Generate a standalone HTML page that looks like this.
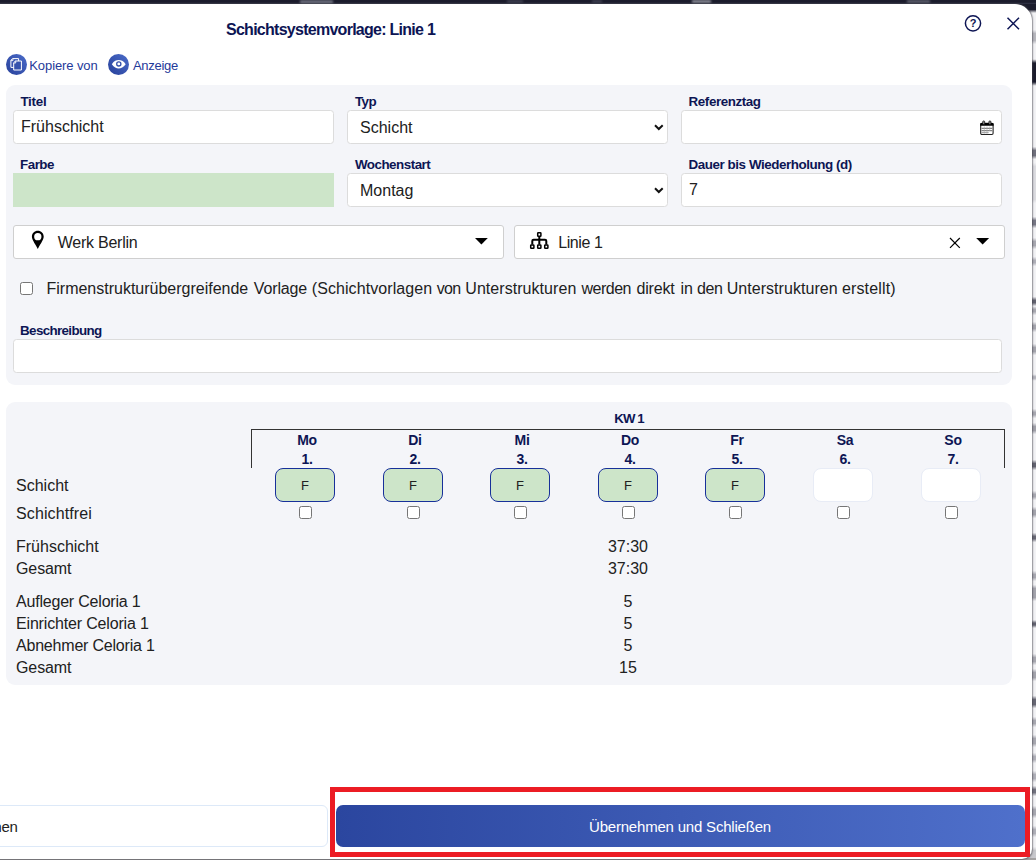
<!DOCTYPE html>
<html lang="de">
<head>
<meta charset="utf-8">
<title>Schichtsystemvorlage: Linie 1</title>
<style>
*{box-sizing:border-box;margin:0;padding:0}
html,body{width:1036px;height:860px;overflow:hidden}
body{background:#1b1c2c;font-family:"Liberation Sans",sans-serif;color:#212121;position:relative}
.abs{position:absolute}
#bgR{left:1020px;top:0;width:16px;height:860px;background:linear-gradient(180deg,#1b1c2c 0,#1b1c2c 9.5px,#f3f3f5 13px,#f3f3f5 29.8px,#b8b8be 33.5px,#b8b8be 40.5px,#f3f3f5 44.2px,#f3f3f5 59.2px,#1b1c2c 63.0px,#1b1c2c 82.0px,#f3f3f5 85.8px,#f3f3f5 146.8px,#70707c 150.5px,#70707c 155.5px,#f3f3f5 159.2px,#f3f3f5 162.8px,#dcdce0 166.5px,#dcdce0 199.5px,#f3f3f5 203.2px,#f3f3f5 216.8px,#777784 220.5px,#777784 224.5px,#f3f3f5 228.2px,#f3f3f5 237.8px,#a8a8b0 241.5px,#a8a8b0 245.5px,#f3f3f5 249.2px,#f3f3f5 256.8px,#b0b0b8 260.3px,#b0b0b8 262.7px,#f3f3f5 266.2px,#f3f3f5 296.8px,#62626e 300.3px,#62626e 302.7px,#f3f3f5 306.2px,#f3f3f5 305.8px,#a8a8b0 309.3px,#a8a8b0 311.7px,#f3f3f5 315.2px,#f3f3f5 321.8px,#a4a4ac 325.5px,#a4a4ac 328.5px,#f3f3f5 332.2px,#f3f3f5 343.8px,#a4a4ac 347.5px,#a4a4ac 351.5px,#f3f3f5 355.2px,#f3f3f5 374.2px,#b4b4bc 376.7px,#b4b4bc 378.3px,#f3f3f5 380.8px,#f3f3f5 408.8px,#a8a8b0 412.3px,#a8a8b0 414.7px,#f3f3f5 418.2px,#f3f3f5 422.8px,#a0a0a8 426.5px,#a0a0a8 430.5px,#f3f3f5 434.2px,#f3f3f5 459.8px,#62626e 463.5px,#62626e 466.5px,#f3f3f5 470.2px,#f3f3f5 490.8px,#a8a8b0 494.3px,#a8a8b0 496.7px,#f3f3f5 500.2px,#f3f3f5 506.8px,#a4a4ac 510.5px,#a4a4ac 514.5px,#f3f3f5 518.2px,#f3f3f5 532.8px,#686874 536.3px,#686874 538.7px,#f3f3f5 542.2px,#f3f3f5 570.8px,#a8a8b0 574.5px,#a8a8b0 577.5px,#f3f3f5 581.2px,#f3f3f5 584.8px,#a4a4ac 588.5px,#a4a4ac 597.5px,#f3f3f5 601.2px,#f3f3f5 620.0px,#62626e 623.0px,#62626e 625.0px,#f3f3f5 628.0px,#f3f3f5 653.8px,#a8a8b0 657.5px,#a8a8b0 661.5px,#f3f3f5 665.2px,#f3f3f5 668.8px,#a4a4ac 672.5px,#a4a4ac 677.5px,#f3f3f5 681.2px,#f3f3f5 695.8px,#686874 699.5px,#686874 704.5px,#f3f3f5 708.2px,#f3f3f5 716.8px,#a8a8b0 720.5px,#a8a8b0 723.5px,#f3f3f5 727.2px,#f3f3f5 734.8px,#a8a8b0 738.5px,#a8a8b0 743.5px,#f3f3f5 747.2px,#f3f3f5 752.8px,#b0b0b8 756.5px,#b0b0b8 759.5px,#f3f3f5 763.2px,#f3f3f5 770.8px,#b0b0b8 774.5px,#b0b0b8 778.5px,#f3f3f5 782.2px,#f3f3f5 785.8px,#72727e 789.5px,#72727e 792.5px,#f3f3f5 796.2px,#f3f3f5 805.8px,#a8a8b0 809.5px,#a8a8b0 814.5px,#f3f3f5 818.2px,#f3f3f5 825.8px,#b0b0b8 829.5px,#b0b0b8 833.5px,#f3f3f5 837.2px,#f3f3f5 846.8px,#c8c8cc 850.5px,#c8c8cc 857.5px,#f3f3f5 861.2px)}
#bgB{left:0;top:858px;width:1036px;height:2px;background:#a4a2a2}
#dlg{left:-30px;top:3.5px;width:1062.2px;height:855.2px;background:#fff;border-radius:0 17px 10px 0;box-shadow:0 0 1.5px 0.5px rgba(60,60,70,0.55)}
#ttl{left:226px;top:19.6px;font-weight:bold;font-size:16px;line-height:20px;color:#0d1554;white-space:nowrap;letter-spacing:-0.73px}
.tb{font-size:13px;line-height:16px;color:#1f3a9a;white-space:nowrap}
.ico{width:21px;height:21px;border-radius:50%;background:linear-gradient(135deg,#2a4299,#4a6bc7)}
.panel{background:#f4f5f9;border-radius:9px}
.lbl{font-weight:bold;font-size:13.4px;line-height:16px;color:#0d1554;white-space:nowrap;letter-spacing:-0.27px}
.inp{background:#fff;border:1px solid #dcdcdc;border-radius:3.5px;height:34px;font-size:16px;line-height:32px;padding-left:7px;color:#212121;white-space:nowrap}
.dd{background:#fff;border:1px solid #cfcfcf;border-radius:3px;height:34px;font-size:16px;line-height:34px;letter-spacing:-0.2px;color:#212121;white-space:nowrap}
.t16{font-size:16px;line-height:20px;white-space:nowrap;color:#212121}
.cb{width:13px;height:13px;border:1px solid #767676;border-radius:2.5px;background:#fff}
.hd{font-weight:bold;font-size:14px;line-height:16px;color:#0d1554;text-align:center;width:60px;white-space:nowrap;letter-spacing:-0.3px}
.fb{width:60px;height:34px;border:1px solid #17309a;border-radius:8px;background:#cde5c9;font-size:13px;line-height:34px;text-align:center;color:#212121}
.eb{width:60px;height:34px;border:1px solid #e8ecf6;border-radius:8px;background:#fff}
.num{width:80px;text-align:center}
</style>
</head>
<body>
<div class="abs" id="bgR"></div>
<div class="abs" id="bgB"></div>
<div class="abs" style="left:0;top:0;width:1036px;height:4px;background:linear-gradient(180deg,#1b1c2c 0,#1b1c2c 55%,#34374a 100%)"></div>
<div class="abs" style="left:300px;top:0;width:33px;height:3.5px;background:#686a78;filter:blur(1px)"></div>
<div class="abs" style="left:507px;top:0;width:16px;height:3px;background:#3c3e4e;filter:blur(1px)"></div>
<div class="abs" style="left:592px;top:0;width:10px;height:3px;background:#3c3e4e;filter:blur(1px)"></div>
<div class="abs" style="left:692px;top:0;width:19px;height:3px;background:#8a8c96;filter:blur(1px)"></div>
<div class="abs" style="left:907px;top:0;width:23px;height:3px;background:#5c5e6c;filter:blur(1px)"></div>
<div class="abs" id="dlg"></div>
<div class="abs" id="ttl">Schichtsystemvorlage: Linie 1</div>

<svg class="abs" style="left:964px;top:14px" width="19" height="19" viewBox="0 0 19 19"><circle cx="9" cy="9.3" r="7.6" fill="none" stroke="#0d1554" stroke-width="1.5"/><text x="9" y="13.2" font-family="Liberation Sans, sans-serif" font-weight="bold" font-size="11" fill="#0d1554" text-anchor="middle">?</text></svg>
<svg class="abs" style="left:1006px;top:16px" width="15" height="15" viewBox="0 0 15 15"><path d="M1.5 1.7L13 13.2M13 1.7L1.5 13.2" stroke="#0d1554" stroke-width="1.5" fill="none"/></svg>

<!-- toolbar -->
<svg class="abs" style="left:6px;top:54px" width="21" height="21" viewBox="0 0 21 21"><defs><linearGradient id="g1" x1="0" y1="1" x2="1" y2="0"><stop offset="0" stop-color="#27409a"/><stop offset="1" stop-color="#4b6cc9"/></linearGradient></defs><circle cx="10.5" cy="10.5" r="10.5" fill="url(#g1)"/><path d="M6.6 4.6H12.6V13.4H4.9V6.3Z" fill="none" stroke="#fff" stroke-width="1"/><path d="M4.9 6.6H6.9V4.6" fill="none" stroke="#fff" stroke-width="0.9"/><path d="M9.4 7H15.4V16H7.7V8.7Z" fill="#3552ad" stroke="#fff" stroke-width="1"/><path d="M7.7 9H9.7V7" fill="none" stroke="#fff" stroke-width="0.9"/></svg>
<div class="abs tb" style="left:29.3px;top:57.5px;letter-spacing:-0.095px">Kopiere von</div>
<svg class="abs" style="left:108px;top:54px" width="21" height="21" viewBox="0 0 21 21"><circle cx="10.5" cy="10.5" r="10.5" fill="url(#g1)"/><path d="M3.8 10.2C6 6.6 8.4 5.9 10.7 5.9S15.4 6.6 17.7 10.2C15.4 13.6 13 14.4 10.7 14.4S6 13.6 3.8 10.2Z" fill="#fff"/><circle cx="10.8" cy="9.9" r="2.1" fill="#fff" stroke="#3350ab" stroke-width="1.3"/></svg>
<div class="abs tb" style="left:132.9px;top:57.5px;letter-spacing:-0.275px">Anzeige</div>

<!-- panel 1 -->
<div class="abs panel" style="left:6px;top:85px;width:1006px;height:300px"></div>
<div class="abs lbl" style="left:20.4px;top:94px;letter-spacing:-0.241px">Titel</div>
<div class="abs inp" style="left:13px;top:110px;width:321px">Frühschicht</div>
<div class="abs lbl" style="left:354.9px;top:94px;letter-spacing:-0.466px">Typ</div>
<div class="abs inp" style="left:347px;top:110px;width:321px;padding-left:12px;line-height:34px">Schicht</div>
<div class="abs lbl" style="left:688.6px;top:94px;letter-spacing:-0.426px">Referenztag</div>
<div class="abs inp" style="left:681px;top:110px;width:321px"></div>

<div class="abs lbl" style="left:20.1px;top:157px;letter-spacing:-0.529px">Farbe</div>
<div class="abs" style="left:13px;top:173px;width:321px;height:34px;background:#cde5c9"></div>
<div class="abs lbl" style="left:354.9px;top:157px;letter-spacing:-0.499px">Wochenstart</div>
<div class="abs inp" style="left:347px;top:173px;width:321px;padding-left:12px;line-height:34px">Montag</div>
<div class="abs lbl" style="left:688.6px;top:157px;letter-spacing:-0.446px">Dauer bis Wiederholung (d)</div>
<div class="abs inp" style="left:681px;top:173px;width:321px">7</div>

<div class="abs dd" style="left:13px;top:225px;width:491px;padding-left:43.7px;letter-spacing:-0.24px">Werk Berlin</div>
<div class="abs dd" style="left:514px;top:225px;width:491px;padding-left:43.2px;letter-spacing:-0.39px">Linie 1</div>

<div class="abs cb" style="left:20px;top:282px"></div>
<div class="abs t16" style="left:0;top:279px;width:1000px;height:20px"><span class="abs" style="left:46.5px;letter-spacing:-0.006px">Firmenstrukturübergreifende</span><span class="abs" style="left:253.8px;letter-spacing:-0.145px">Vorlage</span><span class="abs" style="left:311.8px;letter-spacing:0.075px">(Schichtvorlagen</span><span class="abs" style="left:436.65px;letter-spacing:-0.6px">von</span><span class="abs" style="left:465.3px;letter-spacing:0.052px">Unterstrukturen</span><span class="abs" style="left:581.5px;letter-spacing:-0.496px">werden</span><span class="abs" style="left:636.4px;letter-spacing:-0.156px">direkt</span><span class="abs" style="left:680.5px;letter-spacing:-0.055px">in</span><span class="abs" style="left:697.1px;letter-spacing:-0.498px">den</span><span class="abs" style="left:726.7px;letter-spacing:0.052px">Unterstrukturen</span><span class="abs" style="left:841.9px;letter-spacing:0.159px">erstellt)</span></div>

<div class="abs lbl" style="left:20.1px;top:323px;letter-spacing:-0.655px">Beschreibung</div>
<div class="abs inp" style="left:13px;top:339px;width:989px"></div>

<!-- field icons -->
<svg class="abs" style="left:652px;top:122px" width="14" height="10" viewBox="0 0 14 10"><path d="M3 3.2L6.8 7L10.7 3.2" fill="none" stroke="#111" stroke-width="2"/></svg>
<svg class="abs" style="left:652px;top:185px" width="14" height="10" viewBox="0 0 14 10"><path d="M3 3.2L6.8 7L10.7 3.2" fill="none" stroke="#111" stroke-width="2"/></svg>
<svg class="abs" style="left:979px;top:120px" width="16" height="16" viewBox="0 0 16 16"><rect x="1.7" y="3.4" width="12.4" height="11.1" rx="1.2" fill="#fff" stroke="#222" stroke-width="1.1"/><path d="M1.2 3.9Q1.2 3 2.2 3H13.6Q14.6 3 14.6 3.9V5.7H1.2Z" fill="#000"/><rect x="3.7" y="0.9" width="2" height="3.7" rx="0.9" fill="#8a8a8a" stroke="#000" stroke-width="0.7"/><rect x="9.9" y="0.9" width="2" height="3.7" rx="0.9" fill="#8a8a8a" stroke="#000" stroke-width="0.7"/><path d="M2.6 8.3H13.2M2.6 10.7H13.2" stroke="#555" stroke-width="0.9" fill="none"/><path d="M2.6 12.7H9.6" stroke="#888" stroke-width="0.9" fill="none"/><path d="M5.3 6.5V13.6M8 6.5V13.6M10.7 6.5V11" stroke="#aaa" stroke-width="0.6" fill="none"/></svg>
<svg class="abs" style="left:31px;top:230px" width="14" height="20" viewBox="0 0 14 20"><path d="M6.8 0.8C3.5 0.8 0.9 3.4 0.9 6.6C0.9 9.4 3.2 12.6 6.8 18.9C10.4 12.6 12.7 9.4 12.7 6.6C12.7 3.4 10.1 0.8 6.8 0.8ZM6.8 3A3.65 3.65 0 1 1 6.8 10.3A3.65 3.65 0 1 1 6.8 3Z" fill="#000" fill-rule="evenodd"/></svg>
<svg class="abs" style="left:474px;top:237px" width="15" height="9" viewBox="0 0 15 9"><path d="M1 1H13.8L7.4 7.6Z" fill="#000"/></svg>
<svg class="abs" style="left:529px;top:231px" width="21" height="19" viewBox="0 0 21 19"><g fill="#fff" stroke="#000" stroke-width="1.5"><rect x="8.7" y="1.7" width="3.2" height="3.6" rx="0.6"/><rect x="1.7" y="14" width="3.2" height="3.3" rx="0.6"/><rect x="8.7" y="14" width="3.2" height="3.3" rx="0.6"/><rect x="15.7" y="14" width="3.2" height="3.3" rx="0.6"/></g><path d="M10.3 6V13.6M3.3 13.6V10C3.3 9.2 3.8 8.8 4.6 8.8H16C16.8 8.8 17.3 9.2 17.3 10V13.6" fill="none" stroke="#000" stroke-width="2"/></svg>
<svg class="abs" style="left:948px;top:236px" width="14" height="14" viewBox="0 0 14 14"><path d="M2 2L11.8 11.8M11.8 2L2 11.8" stroke="#000" stroke-width="1.2" fill="none"/></svg>
<svg class="abs" style="left:975px;top:237px" width="15" height="9" viewBox="0 0 15 9"><path d="M1.2 1H14.1L7.6 7.4Z" fill="#000"/></svg>

<!-- panel 2 -->
<div class="abs panel" style="left:6px;top:402px;width:1006px;height:283px"></div>
<div class="abs hd" style="left:599px;top:411px;font-size:13.2px;letter-spacing:-0.75px;word-spacing:-0.3px">KW 1</div>
<div class="abs" style="left:251px;top:429px;width:754px;height:39px;border:1px solid #333;border-bottom:none"></div>

<div class="abs t16" style="left:16px;top:476px;letter-spacing:0">Schicht</div>
<div class="abs t16" style="left:16px;top:503.6px;letter-spacing:0.12px">Schichtfrei</div>
<div class="abs t16" style="left:16px;top:537px;letter-spacing:0">Frühschicht</div>
<div class="abs t16" style="left:16px;top:559px;letter-spacing:-0.1px">Gesamt</div>
<div class="abs t16" style="left:16px;top:591.7px;letter-spacing:-0.2px">Aufleger Celoria 1</div>
<div class="abs t16" style="left:16px;top:613.7px;letter-spacing:-0.17px">Einrichter Celoria 1</div>
<div class="abs t16" style="left:16px;top:635.8px;letter-spacing:-0.2px">Abnehmer Celoria 1</div>
<div class="abs t16" style="left:16px;top:657.8px;letter-spacing:-0.1px">Gesamt</div>

<div class="abs t16 num" style="left:588px;top:537px">37:30</div>
<div class="abs t16 num" style="left:588px;top:559px">37:30</div>
<div class="abs t16 num" style="left:588px;top:592px">5</div>
<div class="abs t16 num" style="left:588px;top:614px">5</div>
<div class="abs t16 num" style="left:588px;top:636px">5</div>
<div class="abs t16 num" style="left:588px;top:658px">15</div>

<!-- week grid -->
<div class="abs hd" style="left:277px;top:432px">Mo</div>
<div class="abs hd" style="left:277px;top:451px">1.</div>
<div class="abs fb" style="left:275px;top:468px">F</div>
<div class="abs cb" style="left:299px;top:506px"></div>
<div class="abs hd" style="left:385px;top:432px">Di</div>
<div class="abs hd" style="left:385px;top:451px">2.</div>
<div class="abs fb" style="left:383px;top:468px">F</div>
<div class="abs cb" style="left:407px;top:506px"></div>
<div class="abs hd" style="left:492px;top:432px">Mi</div>
<div class="abs hd" style="left:492px;top:451px">3.</div>
<div class="abs fb" style="left:490px;top:468px">F</div>
<div class="abs cb" style="left:514px;top:506px"></div>
<div class="abs hd" style="left:600px;top:432px">Do</div>
<div class="abs hd" style="left:600px;top:451px">4.</div>
<div class="abs fb" style="left:598px;top:468px">F</div>
<div class="abs cb" style="left:622px;top:506px"></div>
<div class="abs hd" style="left:707px;top:432px">Fr</div>
<div class="abs hd" style="left:707px;top:451px">5.</div>
<div class="abs fb" style="left:705px;top:468px">F</div>
<div class="abs cb" style="left:729px;top:506px"></div>
<div class="abs hd" style="left:815px;top:432px">Sa</div>
<div class="abs hd" style="left:815px;top:451px">6.</div>
<div class="abs eb" style="left:813px;top:468px"></div>
<div class="abs cb" style="left:837px;top:506px"></div>
<div class="abs hd" style="left:923px;top:432px">So</div>
<div class="abs hd" style="left:923px;top:451px">7.</div>
<div class="abs eb" style="left:921px;top:468px"></div>
<div class="abs cb" style="left:945px;top:506px"></div>

<!-- bottom -->
<div class="abs" style="left:-20px;top:805px;width:348px;height:42px;border:1px solid #dde9f8;border-radius:6px;background:#fff"></div>
<div class="abs" style="left:-66.2px;width:80px;text-align:right;top:818px;font-size:15px;line-height:18px;color:#212121;letter-spacing:-0.3px">Übernehmen</div>
<div class="abs" style="left:335.5px;top:805px;width:689.5px;height:42px;border-radius:7px;background:linear-gradient(90deg,#2b469f,#4f70cb)"></div>
<div class="abs" style="left:335px;top:817px;width:690px;text-align:center;font-size:15px;line-height:20px;color:#fff;letter-spacing:-0.2px">Übernehmen und Schließen</div>
<div class="abs" style="left:330px;top:787px;width:700px;height:70px;border:5px solid #ec1c24"></div>
</body>
</html>
